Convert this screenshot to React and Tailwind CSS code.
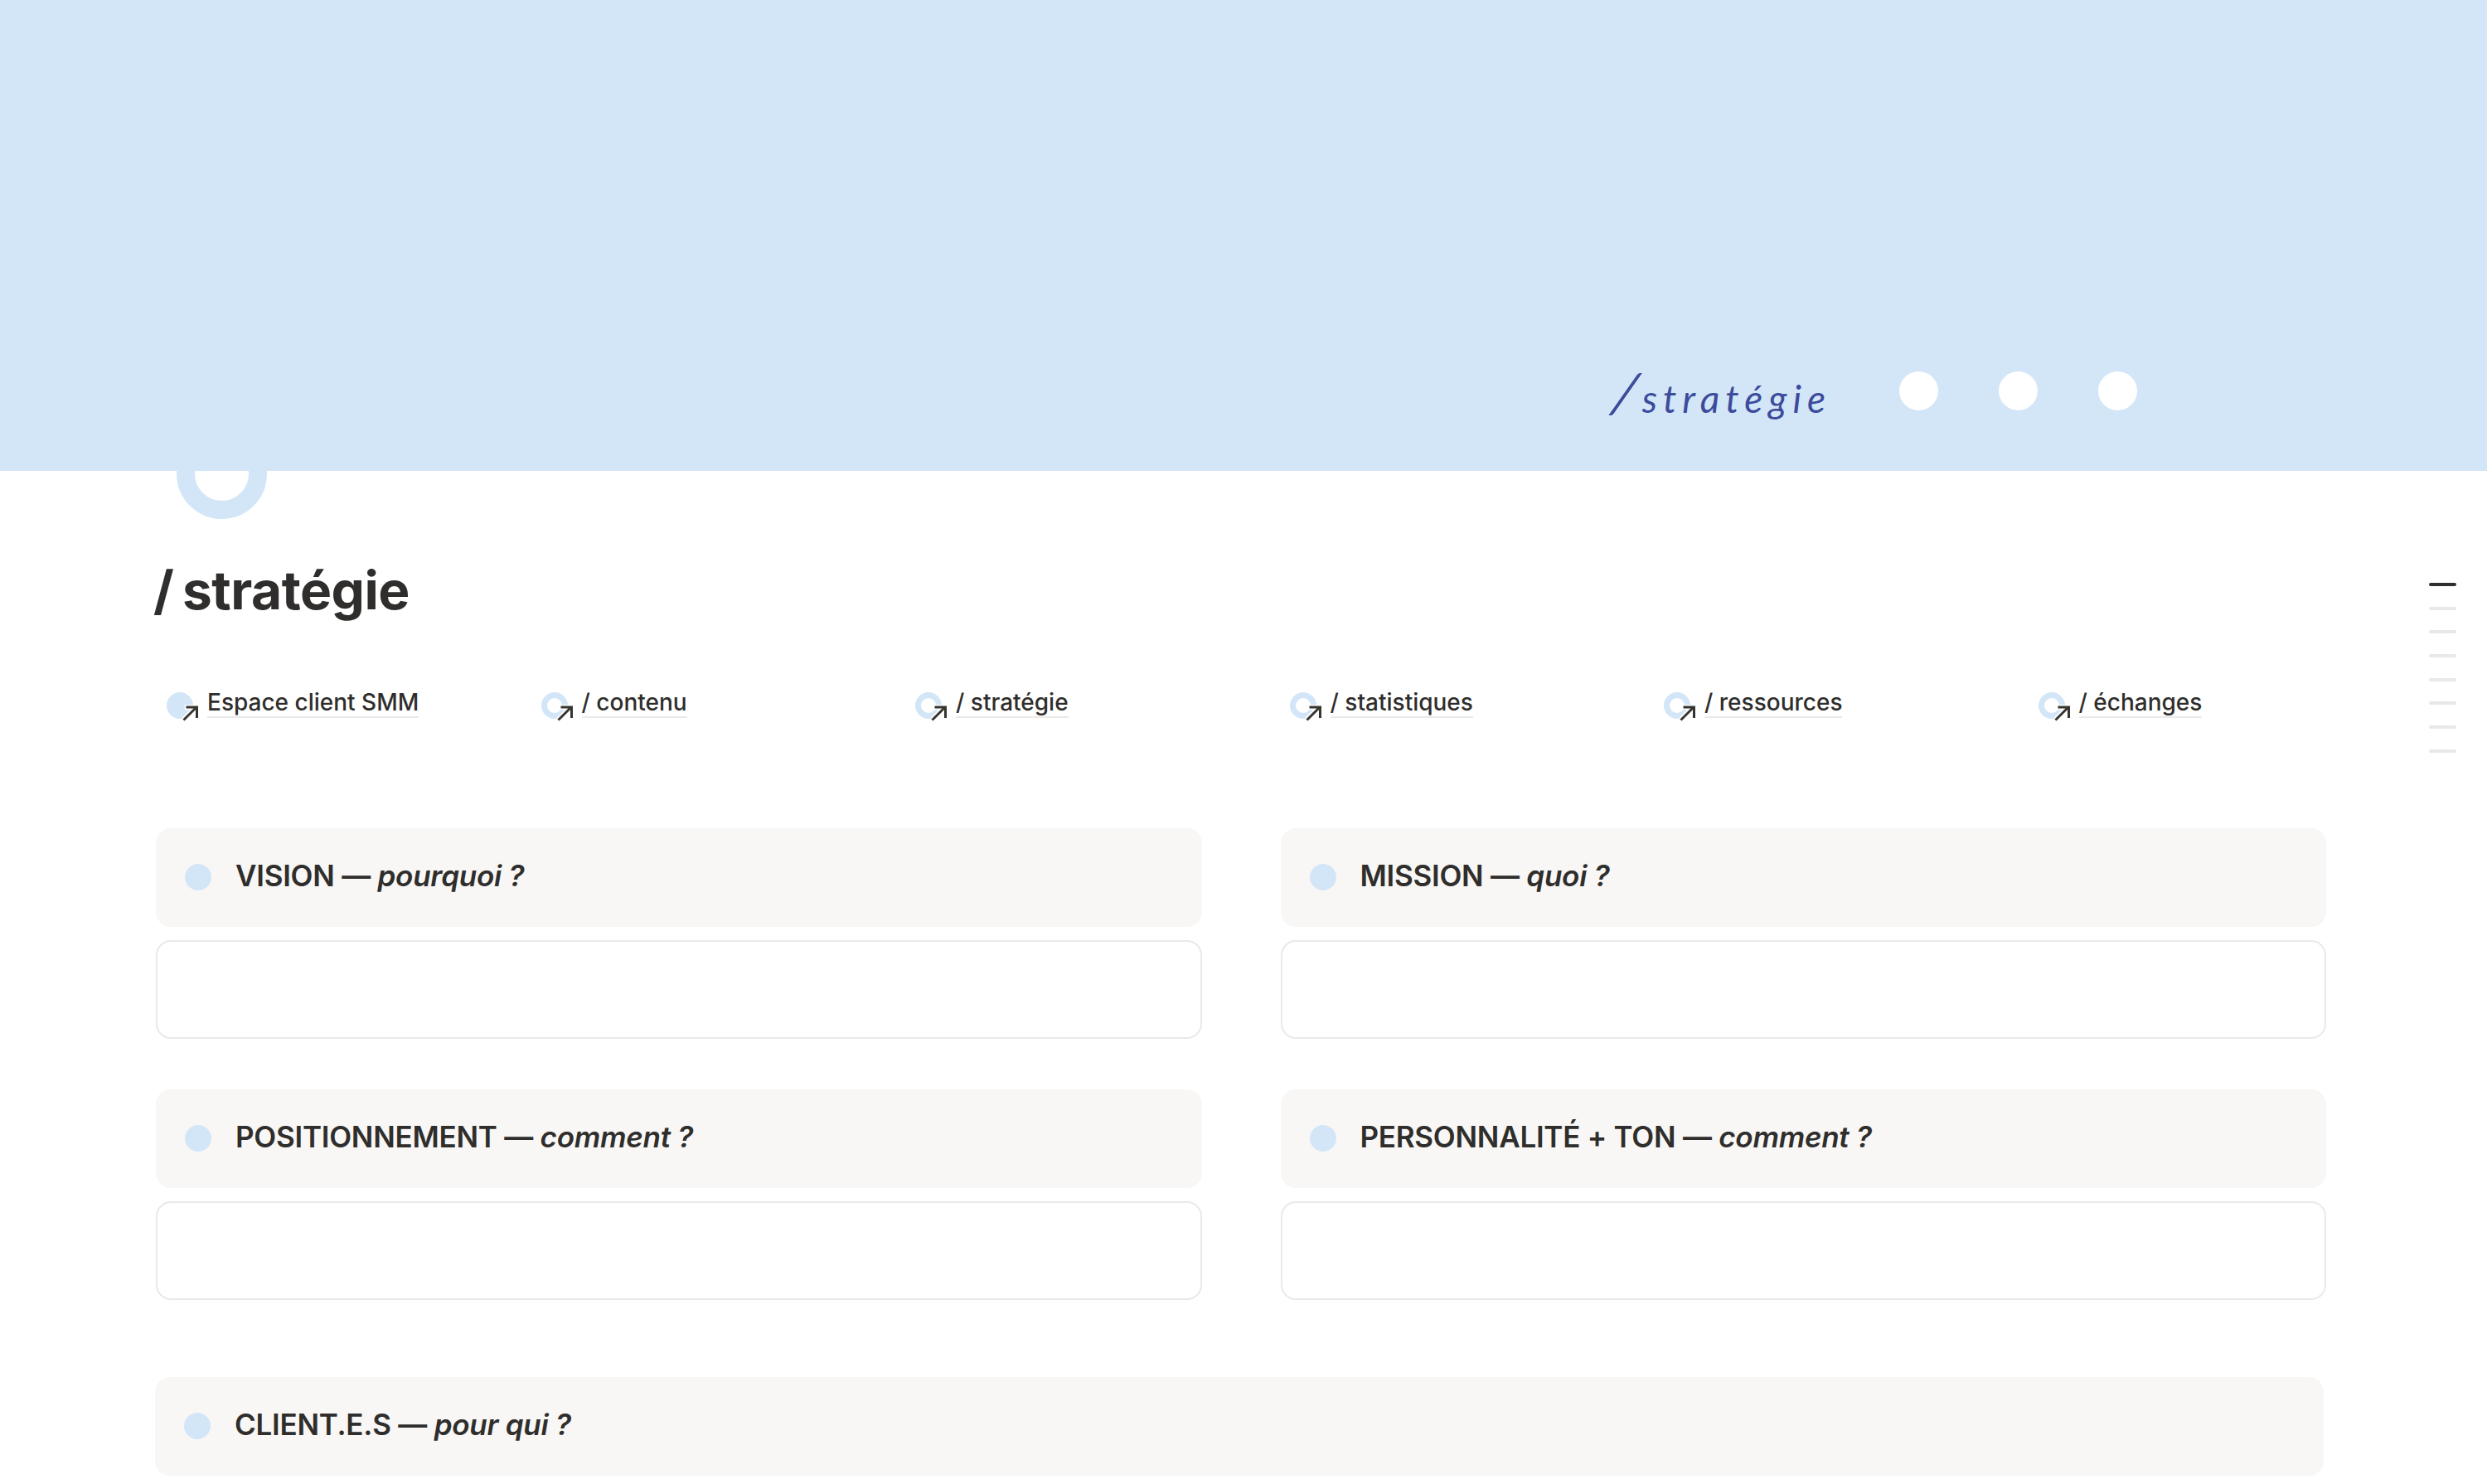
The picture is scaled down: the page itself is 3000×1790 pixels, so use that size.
const links = ["Espace client SMM", "/ contenu", "/ stratégie", "/ statistiques", "/ ressources", "/ échanges"];

const PageLink = ({ label, filled }) => (
  <div className="flex items-start pl-[14px]">
    <span className="relative mt-[11px] mr-[17px] h-8 w-8 shrink-0">
      <span className={filled ? "block h-8 w-8 rounded-full bg-[#d3e6f8]" : "block h-8 w-8 rounded-full border-[7px] border-[#d3e6f8]"}></span>
      <svg className="absolute left-[19px] top-[15px]" width="20" height="20" viewBox="0 0 20 20" fill="none" strokeLinecap="square">
        <path d="M2.5 17.5 L16.5 3.5 M6 3 H17.5 V14.5" stroke="#fff" strokeWidth="6.5" />
        <path d="M2.5 17.5 L16.5 3.5 M6 3 H17.5 V14.5" stroke="#373530" strokeWidth="3" />
      </svg>
    </span>
    <span className="h-[42px] border-b-2 border-[#e9e9e7] pt-[6px] text-[28px] leading-[34px] font-medium whitespace-nowrap text-[#2f2e2c]">{label}</span>
  </div>
);

const Heading = ({ title, hint, className }) => (
  <div className={`flex h-[119px] items-center rounded-[18px] bg-[#f8f7f5] pb-[2px] pl-[35px] ${className || ""}`}>
    <span className="mr-[29px] h-8 w-8 shrink-0 rounded-full bg-[#d3e6f8]"></span>
    <p className="-mt-[3px] text-[35px] font-semibold tracking-[-0.25px] text-[#2f2e2c]">
      {title} — <em>{hint}</em>
    </p>
  </div>
);

const Block = ({ title, hint }) => (
  <div>
    <Heading title={title} hint={hint} />
    <div className="mt-4 h-[119px] rounded-[18px] border-2 border-[#e9e9e7] bg-white"></div>
  </div>
);

const App = () => {
  return (
    <div className="relative h-[1790px] overflow-hidden bg-white font-['Inter',sans-serif]">
      {/* Cover */}
      <section className="flex h-[568px] items-start justify-end bg-[#d3e6f8] pt-[448px] pr-[422px]">
        <p className="mr-[82px] -mt-[15px] flex items-baseline font-['Lato',sans-serif] font-normal whitespace-nowrap text-[#3c4b9b] italic">
          <span className="-skew-x-12 text-[66px] leading-[80px]">/</span>
          <span className="ml-[6px] text-[46px] leading-[80px] tracking-[7px]">stratégie</span>
        </p>
        <div className="flex gap-[73px]">
          <span className="h-[47px] w-[47px] rounded-full bg-white"></span>
          <span className="h-[47px] w-[47px] rounded-full bg-white"></span>
          <span className="h-[47px] w-[47px] rounded-full bg-white"></span>
        </div>
      </section>

      <section className="pr-[194px] pl-[187px]">
        <div className="relative -mt-[51px] ml-[26px] h-[109px] w-[109px] rounded-full border-[22px] border-[#d3e6f8]"></div>
        <h1 className="mt-[46px] -ml-[2px] h-[80px] text-[64px] leading-[80px] font-bold tracking-[-0.5px] text-[#2f2e2c] [word-spacing:-4px]">/ stratégie</h1>

        <div className="mt-[72px] grid grid-cols-6 gap-[90px]">
          {links.map((label, i) => (
            <PageLink key={label} label={label} filled={i === 0} />
          ))}
        </div>

        <div className="mt-[132px] grid grid-cols-2 gap-x-[95px] gap-y-[61px] pl-px">
          <Block title="VISION" hint="pourquoi ?" />
          <Block title="MISSION" hint="quoi ?" />
          <Block title="POSITIONNEMENT" hint="comment ?" />
          <Block title="PERSONNALITÉ + TON" hint="comment ?" />
        </div>

        <Heading title="CLIENT.E.S" hint="pour qui ?" className="mt-[93px] mr-[3px]" />
      </section>

      {/* Page outline */}
      <div className="absolute top-[703px] right-[37px] flex w-[33px] flex-col gap-[24.7px]">
        <span className="h-1 rounded-full bg-[#2f2e2c]"></span>
        {[1, 2, 3, 4, 5, 6, 7].map((n) => (
          <span key={n} className="h-1 rounded-full bg-[#e8e8e6]"></span>
        ))}
      </div>
    </div>
  );
};

export default App;
